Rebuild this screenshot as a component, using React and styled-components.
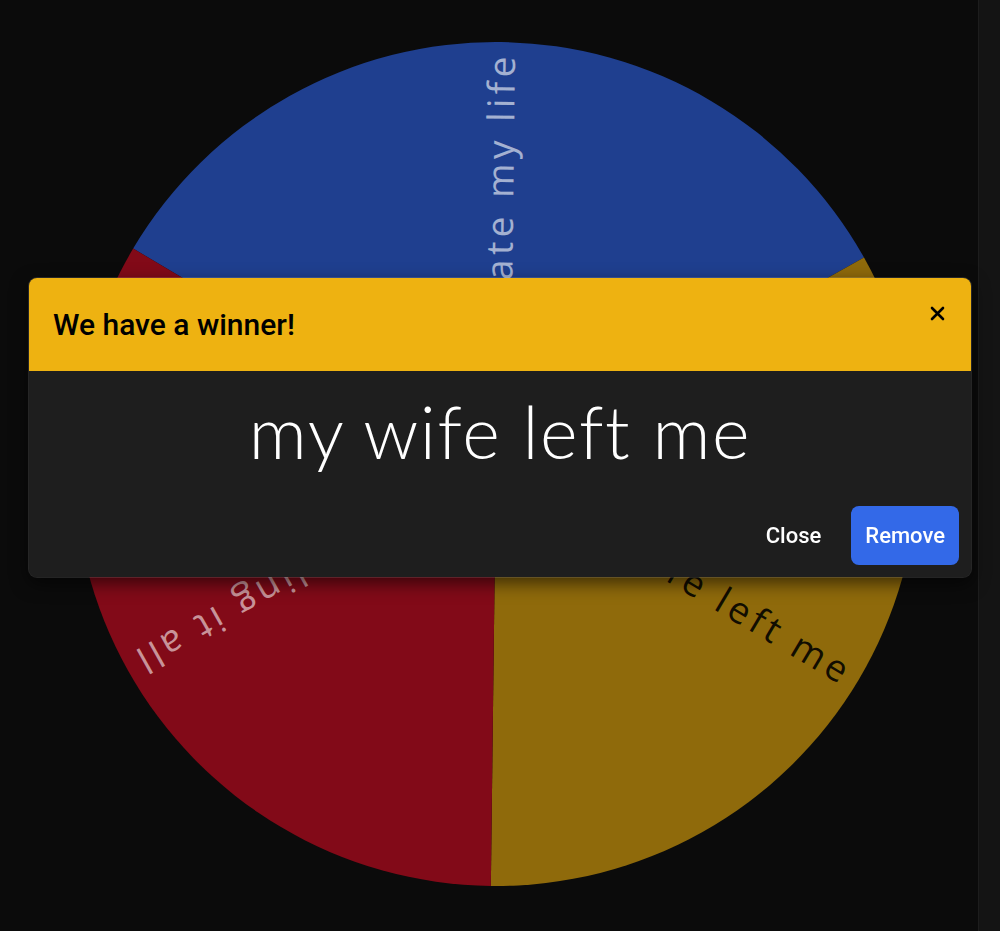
import React from "react";
import styled, { createGlobalStyle } from "styled-components";

const GlobalStyle = createGlobalStyle`
  html, body {
    margin: 0;
    padding: 0;
    background: #0b0b0b;
    overflow: hidden;
  }
`;

const SIZE = 844;
const R = SIZE / 2;
const START = -59.3;

const entries = [
  { label: "work ate my life", fill: "#1f3f8f", ink: "rgba(255,255,255,0.6)" },
  { label: "my wife left me", fill: "#8f6a0b", ink: "rgba(0,0,0,0.88)" },
  { label: "ending it all", fill: "#820a18", ink: "rgba(255,255,255,0.58)" },
];

const polar = (deg) => {
  const a = (deg * Math.PI) / 180;
  return [R + R * Math.sin(a), R - R * Math.cos(a)];
};

const slicePath = (from, to) => {
  const [x1, y1] = polar(from);
  const [x2, y2] = polar(to);
  return `M${R},${R} L${x1},${y1} A${R},${R} 0 0 1 ${x2},${y2} Z`;
};

const Wheel = ({ items }) => {
  const step = 360 / items.length;
  return (
    <WheelSvg viewBox={`0 0 ${SIZE} ${SIZE}`}>
      {items.map((item, i) => {
        const from = START + i * step;
        const mid = from + step / 2;
        return (
          <g key={item.label}>
            <path d={slicePath(from, from + step)} fill={item.fill} />
            <WheelLabel
              x={R + 412}
              y={R + 14}
              $ink={item.ink}
              transform={`rotate(${mid - 90} ${R} ${R})`}
            >
              {item.label}
            </WheelLabel>
          </g>
        );
      })}
    </WheelSvg>
  );
};

const CloseIcon = () => (
  <svg width="15" height="15" viewBox="0 0 15 15">
    <path d="M2 2 L13 13 M13 2 L2 13" stroke="#000" strokeWidth="2.6" strokeLinecap="round" />
  </svg>
);

const App = () => {
  return (
    <>
      <GlobalStyle />
      <Page>
        <Stage>
          <Wheel items={entries} />
        </Stage>
        <ScrollTrack />
      </Page>
      <Dialog>
        <Header>
          <Title>We have a winner!</Title>
          <DismissButton aria-label="Close">
            <CloseIcon />
          </DismissButton>
        </Header>
        <Body>
          <Winner>my wife left me</Winner>
        </Body>
        <Footer>
          <Button>Close</Button>
          <Button $primary>Remove</Button>
        </Footer>
      </Dialog>
    </>
  );
};

export default App;

const Page = styled.div`
  display: flex;
  height: 100vh;
  background: #0b0b0b;
`;

const Stage = styled.main`
  flex: 1;
  padding: 42px 0 0 74px;
`;

const WheelSvg = styled.svg`
  display: block;
  width: ${SIZE}px;
  height: ${SIZE}px;
`;

const WheelLabel = styled.text`
  font-family: "Open Sans", sans-serif;
  font-size: 37px;
  letter-spacing: 4.5px;
  text-anchor: end;
  fill: ${(p) => p.$ink};
`;

const ScrollTrack = styled.div`
  width: 21px;
  background: #141414;
  border-left: 1px solid #1d1d1d;
`;

const Dialog = styled.section`
  position: fixed;
  top: 278px;
  left: 29px;
  width: 942px;
  border-radius: 8px;
  overflow: hidden;
  background: #1e1e1e;
  box-shadow: 0 0 0 1px rgba(255, 255, 255, 0.12), 0 6px 18px rgba(0, 0, 0, 0.6);
  font-family: Roboto, "Liberation Sans", sans-serif;
`;

const Header = styled.header`
  position: relative;
  display: flex;
  align-items: center;
  height: 93px;
  padding: 0 24px;
  background: #eeb211;
`;

const Title = styled.h2`
  margin: 0;
  font-size: 30px;
  font-weight: 500;
  color: #000;
`;

const DismissButton = styled.button`
  position: absolute;
  top: 19px;
  right: 18px;
  width: 32px;
  height: 32px;
  display: flex;
  align-items: center;
  justify-content: center;
  padding: 0;
  border: none;
  background: transparent;
  cursor: pointer;
`;

const Body = styled.div`
  padding: 17px 24px 20px;
  text-align: center;
`;

const Winner = styled.div`
  font-family: Lato, "Open Sans", sans-serif;
  font-size: 72px;
  font-weight: 300;
  line-height: 86px;
  letter-spacing: 1.6px;
  color: #fff;
`;

const Footer = styled.footer`
  display: flex;
  justify-content: flex-end;
  gap: 16px;
  padding: 12px;
`;

const Button = styled.button`
  height: 59px;
  padding: 0 14px;
  border: none;
  border-radius: 8px;
  font-family: Roboto, "Liberation Sans", sans-serif;
  font-size: 22px;
  font-weight: 500;
  color: #fff;
  background: ${(p) => (p.$primary ? "#3369e8" : "transparent")};
  cursor: pointer;
`;
